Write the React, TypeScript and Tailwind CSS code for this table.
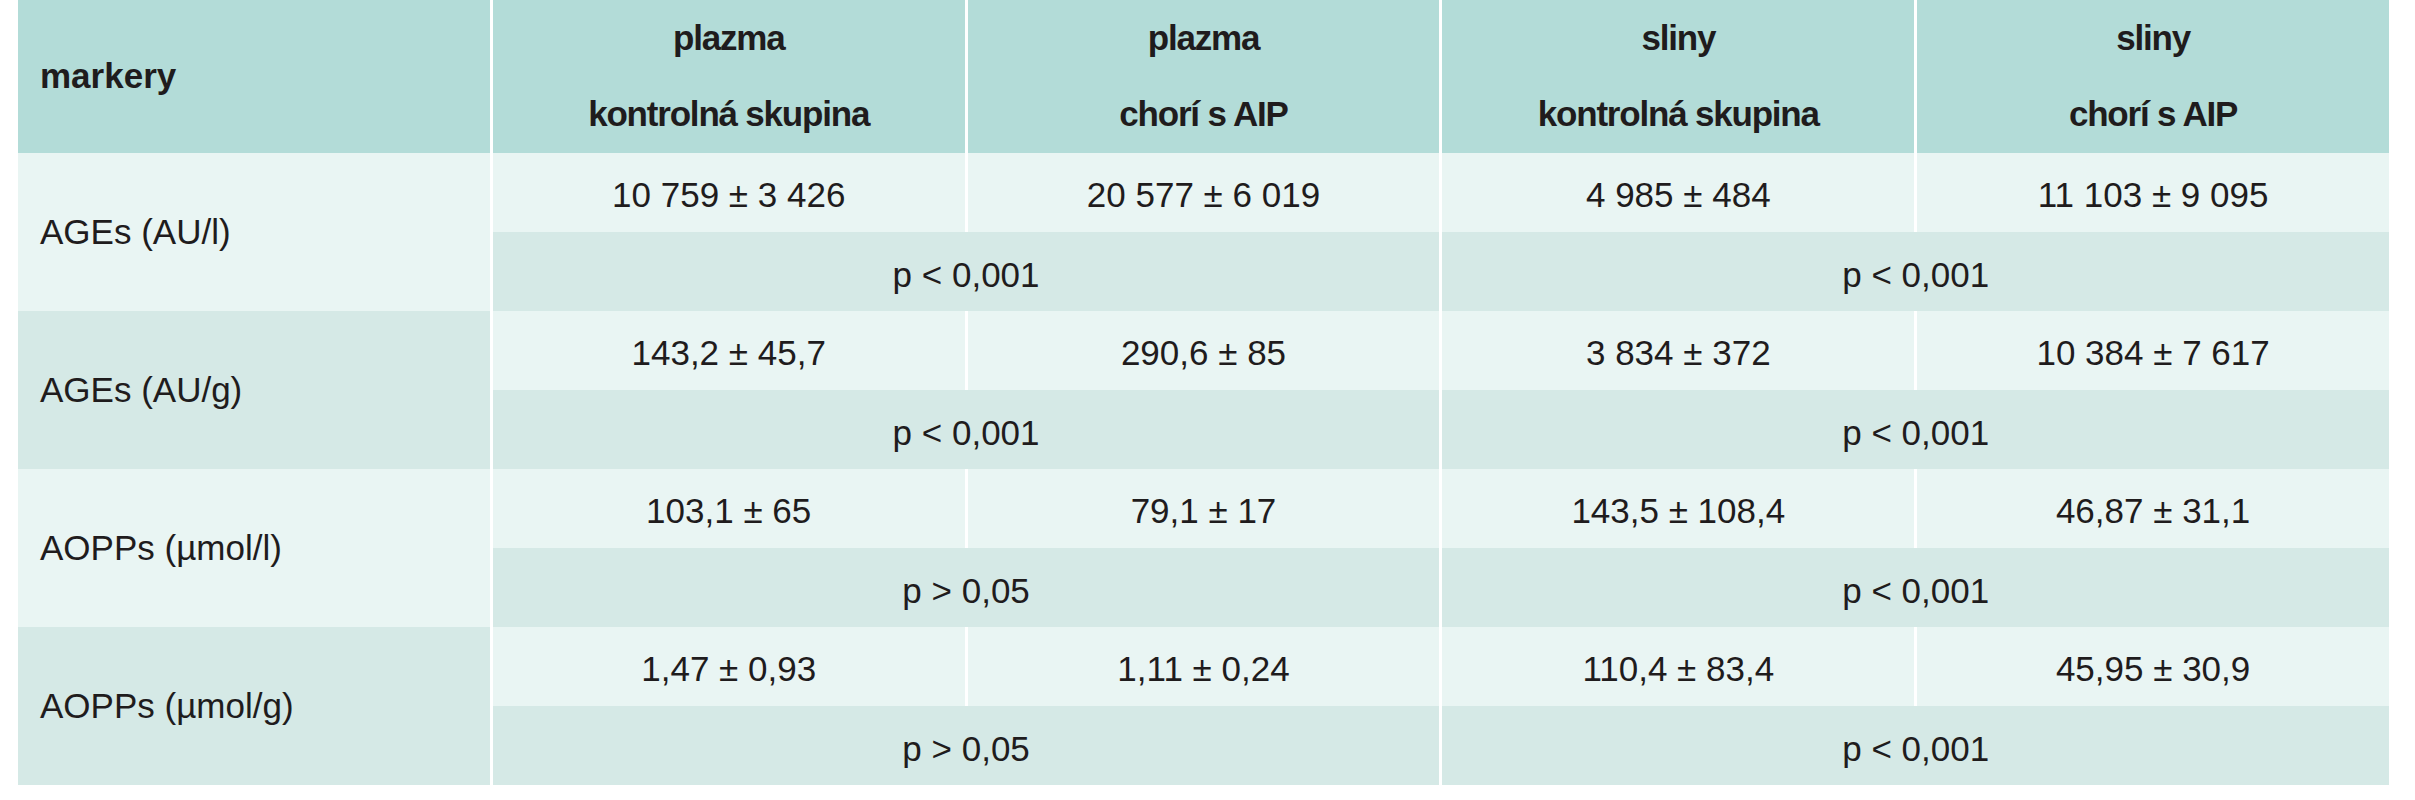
import React from "react";

const rows = [
  {
    label: "AGEs (AU/l)",
    values: ["10 759 ± 3 426", "20 577 ± 6 019", "4 985 ± 484", "11 103 ± 9 095"],
    p: ["p < 0,001", "p < 0,001"],
  },
  {
    label: "AGEs (AU/g)",
    values: ["143,2 ± 45,7", "290,6 ± 85", "3 834 ± 372", "10 384 ± 7 617"],
    p: ["p < 0,001", "p < 0,001"],
  },
  {
    label: "AOPPs (µmol/l)",
    values: ["103,1 ± 65", "79,1 ± 17", "143,5 ± 108,4", "46,87 ± 31,1"],
    p: ["p > 0,05", "p < 0,001"],
  },
  {
    label: "AOPPs (µmol/g)",
    values: ["1,47 ± 0,93", "1,11 ± 0,24", "110,4 ± 83,4", "45,95 ± 30,9"],
    p: ["p > 0,05", "p < 0,001"],
  },
];

const headers = [
  ["plazma", "kontrolná skupina"],
  ["plazma", "chorí s AIP"],
  ["sliny", "kontrolná skupina"],
  ["sliny", "chorí s AIP"],
];

export default function App() {
  return (
    <div
      className="w-[2415px] h-[800px] bg-white pl-[18px] pr-[26px] text-[#1f1c1d] text-[35px]"
      style={{ fontFamily: '"Liberation Sans", Arial, sans-serif' }}
    >
      <div className="grid grid-cols-5 gap-x-[3px] grid-rows-[153px_repeat(8,79px)]">
        <div className="bg-[#b3dcd8] flex items-center pl-[22px] font-bold">
          markery
        </div>
        {headers.map((h, i) => (
          <div key={i} className="bg-[#b3dcd8] flex flex-col font-bold tracking-[-1.2px]">
            <div className="h-[76px] flex items-center justify-center">{h[0]}</div>
            <div className="h-[77px] flex items-center justify-center">{h[1]}</div>
          </div>
        ))}
        {rows.map((r, ri) => (
          <React.Fragment key={ri}>
            <div
              className={
                "row-span-2 flex items-center pl-[22px] " +
                (ri % 2 === 0 ? "bg-[#e9f5f3]" : "bg-[#d5e9e6]")
              }
            >
              {r.label}
            </div>
            {r.values.map((v, vi) => (
              <div
                key={vi}
                className="bg-[#e9f5f3] flex items-center justify-center pt-[6px]"
              >
                {v}
              </div>
            ))}
            {r.p.map((p, pi) => (
              <div
                key={pi}
                className="col-span-2 bg-[#d5e9e6] flex items-center justify-center pt-[8px]"
              >
                {p}
              </div>
            ))}
          </React.Fragment>
        ))}
      </div>
    </div>
  );
}
